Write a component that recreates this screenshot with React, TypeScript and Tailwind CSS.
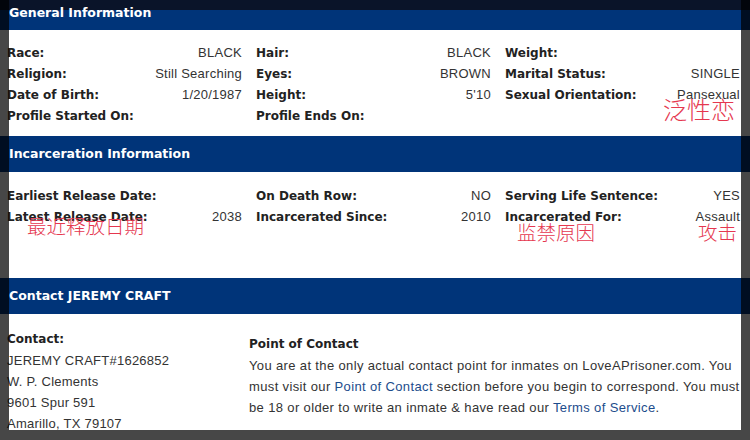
import React from 'react';

type Cell = { label: string; value?: string };

const sans = "font-['Liberation_Sans',Arial,sans-serif] tracking-[0.25px]";
const bold = "font-['DejaVu_Sans',Verdana,sans-serif] font-bold tracking-normal";

const Header: React.FC<{ title: string; top?: boolean }> = ({ title, top }) => (
  <div
    className={
      top
        ? `-mt-[6px] h-[36px] flex items-center pl-[9px] pt-[2px] text-white text-[12.5px] ${bold} bg-[linear-gradient(to_bottom,#0a1429_16px,#003479_16px)]`
        : `h-[36px] flex items-center pl-[9px] pt-[1px] text-white text-[12.5px] ${bold} bg-[#003479]`
    }
  >
    {title}
  </div>
);

const InfoRow: React.FC<{ cells: Cell[] }> = ({ cells }) => (
  <div className="grid grid-cols-[249px_249px_249px] h-[21px]">
    {cells.map((c, i) => (
      <div key={i} className="flex items-center justify-between px-[7px] whitespace-nowrap">
        <span className={`text-[12px] text-[#222] ${bold}`}>{c.label}</span>
        <span className={`text-[13px] text-[#333] ${sans}`}>{c.value}</span>
      </div>
    ))}
  </div>
);

const general: Cell[][] = [
  [
    { label: 'Race:', value: 'BLACK' },
    { label: 'Hair:', value: 'BLACK' },
    { label: 'Weight:' },
  ],
  [
    { label: 'Religion:', value: 'Still Searching' },
    { label: 'Eyes:', value: 'BROWN' },
    { label: 'Marital Status:', value: 'SINGLE' },
  ],
  [
    { label: 'Date of Birth:', value: '1/20/1987' },
    { label: 'Height:', value: "5'10" },
    { label: 'Sexual Orientation:', value: 'Pansexual' },
  ],
  [{ label: 'Profile Started On:' }, { label: 'Profile Ends On:' }, { label: '' }],
];

const incarceration: Cell[][] = [
  [
    { label: 'Earliest Release Date:' },
    { label: 'On Death Row:', value: 'NO' },
    { label: 'Serving Life Sentence:', value: 'YES' },
  ],
  [
    { label: 'Latest Release Date:', value: '2038' },
    { label: 'Incarcerated Since:', value: '2010' },
    { label: 'Incarcerated For:', value: 'Assault' },
  ],
];

const cjk = "font-['Noto_Sans_CJK_SC',sans-serif] font-light text-[#e5374f] leading-none whitespace-nowrap";

export default function App() {
  return (
    <div className="relative w-[750px] h-[440px] overflow-hidden bg-white">
      <Header title="General Information" top />
      <div className="h-[106px] pt-[12px]">
        {general.map((r, i) => (
          <InfoRow key={i} cells={r} />
        ))}
      </div>

      <Header title="Incarceration Information" />
      <div className="h-[106px] pt-[13px]">
        {incarceration.map((r, i) => (
          <InfoRow key={i} cells={r} />
        ))}
      </div>

      <Header title="Contact JEREMY CRAFT" />
      <div className={`flex leading-[21px] text-[13px] text-[#333] ${sans}`}>
        <div className="w-[249px] pl-[7px] pt-[15px] whitespace-nowrap">
          <div className={`text-[12px] text-[#222] ${bold}`}>Contact:</div>
          <div>JEREMY CRAFT#1626852</div>
          <div>W. P. Clements</div>
          <div>9601 Spur 591</div>
          <div>Amarillo, TX 79107</div>
        </div>
        <div className="pt-[20px] whitespace-nowrap tracking-[0.36px]">
          <div className={`text-[12px] text-[#222] ${bold}`}>Point of Contact</div>
          <div>You are at the only actual contact point for inmates on LoveAPrisoner.com. You</div>
          <div>
            must visit our <span className="text-[#1c4c8c]">Point of Contact</span> section before you begin to correspond. You must
          </div>
          <div>
            be 18 or older to write an inmate &amp; have read our <span className="text-[#1c4c8c]">Terms of Service</span>.
          </div>
        </div>
      </div>

      {/* red annotations */}
      <div className={`absolute left-[663px] top-[97px] text-[24px] ${cjk}`}>泛性恋</div>
      <div className={`absolute left-[27px] top-[216px] text-[19.5px] ${cjk}`}>最近释放日期</div>
      <div className={`absolute left-[517px] top-[222px] text-[19.5px] ${cjk}`}>监禁原因</div>
      <div className={`absolute left-[698px] top-[222px] text-[19.5px] ${cjk}`}>攻击</div>

      {/* dimmed surround */}
      <div className="absolute left-0 top-0 w-[9px] h-[430px] bg-black/[0.72]" />
      <div className="absolute left-[741px] top-0 w-[9px] h-[430px] bg-black/[0.72]" />
      <div className="absolute left-0 top-[430px] w-[750px] h-[10px] bg-black/[0.72]" />
    </div>
  );
}
